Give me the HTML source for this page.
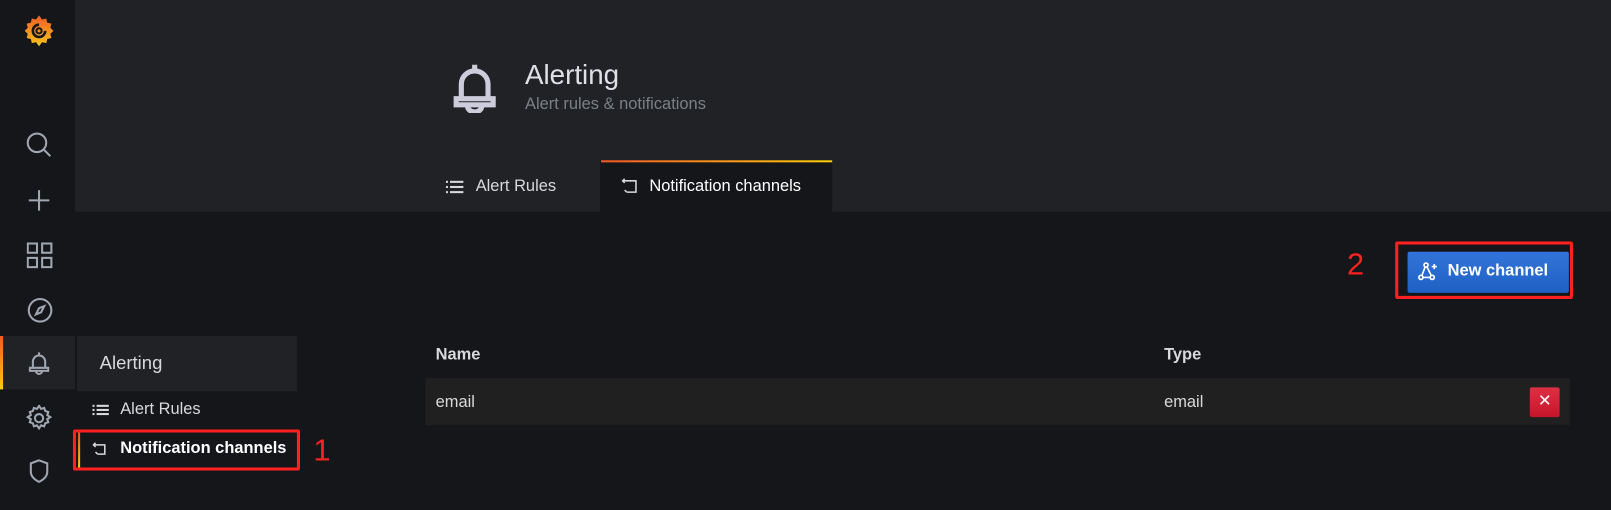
<!DOCTYPE html>
<html><head><meta charset="utf-8"><style>
*{margin:0;padding:0;box-sizing:border-box}
html,body{width:1611px;height:510px;overflow:hidden;background:#141619}
#w{width:1568px;height:496px;transform:scale(1.02742);transform-origin:0 0;position:relative;font-family:"Liberation Sans",sans-serif;color:#d8d9da}
.abs{position:absolute}
svg{position:absolute}
</style></head><body><div id="w">
<div class="abs" style="left:73px;top:0;width:1495px;height:206px;background:#212226"></div>
<div class="abs" style="left:0;top:0;width:73px;height:496px;background:#141619"></div>
<svg style="left:22px;top:13px" width="32" height="34" viewBox="0 0 32 34"><defs><linearGradient id="g" x1="0" y1="1" x2="0" y2="0"><stop offset="0" stop-color="#fcc516"/><stop offset="1" stop-color="#f05a28"/></linearGradient></defs><path d="M16 2l3 4 4-1 1 4 4 1-1 4 3 3-3 3 1 4-4 1-1 4-4-1-3 4-3-4-4 1-1-4-4-1 1-4-3-3 3-3-1-4 4-1 1-4 4 1z" fill="url(#g)"/><path d="M16 11a6 6 0 1 0 6 6" fill="none" stroke="#141619" stroke-width="2.5"/><circle cx="16" cy="17" r="2.5" fill="none" stroke="#141619" stroke-width="2"/></svg>
<svg style="left:25px;top:128px" width="26" height="26" fill="none" stroke="#9fa7b3" stroke-width="2"><circle cx="11" cy="11" r="9"/><path d="M18 18l6 6"/></svg>
<svg style="left:27px;top:184px" width="22" height="22" fill="none" stroke="#9fa7b3" stroke-width="2"><path d="M11 1v20M1 11h20"/></svg>
<svg style="left:26px;top:236px" width="26" height="26" fill="none" stroke="#9fa7b3" stroke-width="2"><rect x="1" y="1" width="9" height="9"/><rect x="15" y="1" width="9" height="9"/><rect x="1" y="15" width="9" height="9"/><rect x="15" y="15" width="9" height="9"/></svg>
<svg style="left:26px;top:289px" width="26" height="26" fill="none" stroke="#9fa7b3" stroke-width="2"><circle cx="13" cy="13" r="11"/><path d="M9 17l3-6 5-2-3 6z"/></svg>
<div class="abs" style="left:0;top:327px;width:73px;height:52px;background:#202226"></div>
<div class="abs" style="left:0;top:327px;width:3px;height:52px;background:linear-gradient(#f05a28,#fbca0a)"></div>
<svg style="left:28px;top:342px" width="20" height="24" fill="none" stroke="#9fa7b3" stroke-width="2"><path d="M10 1v3M4 16V10a6 6 0 0 1 12 0v6M1 16h18v3H1zM7 19a3 3 0 0 0 6 0"/></svg>
<svg style="left:25px;top:394px" width="26" height="26" fill="none" stroke="#9fa7b3" stroke-width="2"><circle cx="13" cy="13" r="4"/><path d="M13 1l2 3 3-1 1 3 3 1-1 3 3 2-3 2 1 3-3 1-1 3-3-1-2 3-2-3-3 1-1-3-3-1 1-3-3-2 3-2-1-3 3-1 1-3 3 1z"/></svg>
<svg style="left:28px;top:447px" width="20" height="24" fill="none" stroke="#9fa7b3" stroke-width="2"><path d="M10 1l8 3v8c0 5-4 8-8 10-4-2-8-5-8-10V4z"/></svg>
<div class="abs" style="left:75px;top:327px;width:214px;height:54px;background:#202226;font-size:18px;color:#d8d9da;padding:16px 0 0 22px">Alerting</div>
<div class="abs" style="left:75px;top:381px;width:214px;height:80px;background:#141619"></div>
<svg style="left:90px;top:393px" width="16" height="12" fill="#d8d9da"><rect x="0" y="1" width="2" height="2"/><rect x="4" y="1" width="12" height="2"/><rect x="0" y="5" width="2" height="2"/><rect x="4" y="5" width="12" height="2"/><rect x="0" y="9" width="2" height="2"/><rect x="4" y="9" width="12" height="2"/></svg>
<div class="abs" style="left:117px;top:390px;font-size:16px;color:#d8d9da">Alert Rules</div>
<div class="abs" style="left:76px;top:421px;width:2px;height:34px;background:linear-gradient(#f05a28,#fbca0a)"></div>
<svg style="left:90px;top:429px" width="16" height="16" fill="none" stroke="#d8d9da" stroke-width="1.5"><path d="M3 2L1 4l2 2M1 4h11v9H5M5 13l-2-2"/></svg>
<div class="abs" style="left:117px;top:428px;font-size:16px;font-weight:bold;color:#fff">Notification channels</div>
<div class="abs" style="left:71px;top:418px;width:221px;height:40px;border:3px solid #ff2020;border-radius:2px"></div>
<div class="abs" style="left:305px;top:422px;font-size:30px;color:#ff2020">1</div>
<svg style="left:441px;top:60px" width="42" height="50" fill="none" stroke="#ccccdc" stroke-width="5"><path d="M21 3v5M8 36V22a13 13 0 0 1 26 0v14M3 36h36v6H3zM14 43a7 6 0 0 0 14 0"/></svg>
<div class="abs" style="left:511px;top:58px;font-size:27px;color:#e0e0e6">Alerting</div>
<div class="abs" style="left:511px;top:93px;font-size:16px;color:#7b8087">Alert rules &amp; notifications</div>
<svg style="left:434px;top:175px" width="18" height="14" fill="#d8d9da"><rect x="0" y="1" width="2" height="2"/><rect x="4" y="1" width="13" height="2"/><rect x="0" y="6" width="2" height="2"/><rect x="4" y="6" width="13" height="2"/><rect x="0" y="11" width="2" height="2"/><rect x="4" y="11" width="13" height="2"/></svg>
<div class="abs" style="left:463px;top:173px;font-size:16px;color:#d8d9da">Alert Rules</div>
<div class="abs" style="left:584px;top:156px;width:226px;height:50px;background:#141619"></div>
<div class="abs" style="left:585px;top:156px;width:225px;height:2px;background:linear-gradient(90deg,#f05a28,#fbca0a)"></div>
<svg style="left:604px;top:172px" width="18" height="18" fill="none" stroke="#d8d9da" stroke-width="1.5"><path d="M4 2L2 4l2 2M2 4h13v11H6M6 15l-2-2"/></svg>
<div class="abs" style="left:632px;top:173px;font-size:16px;color:#fff">Notification channels</div>
<div class="abs" style="left:1370px;top:245px;width:157px;height:40px;background:linear-gradient(#3274d9,#1f60c4);border-radius:2px"></div>
<svg style="left:1380px;top:254px" width="20" height="20" fill="none" stroke="#fff" stroke-width="1.6"><circle cx="8" cy="4" r="2"/><circle cx="3" cy="16" r="2"/><circle cx="14" cy="16" r="2"/><path d="M7 6l-3 8M9 6l4 8M5 16h7M16 3v5M13.5 5.5h5"/></svg>
<div class="abs" style="left:1409px;top:255px;font-size:16px;font-weight:bold;color:#fff">New channel</div>
<div class="abs" style="left:1358px;top:235px;width:173px;height:56px;border:3px solid #ff2020;border-radius:2px"></div>
<div class="abs" style="left:1311px;top:241px;font-size:30px;color:#ff2020">2</div>
<div class="abs" style="left:424px;top:337px;font-size:16px;font-weight:bold;color:#d8d9da">Name</div>
<div class="abs" style="left:1133px;top:337px;font-size:16px;font-weight:bold;color:#d8d9da">Type</div>
<div class="abs" style="left:414px;top:368px;width:1114px;height:46px;background:#202020"></div>
<div class="abs" style="left:424px;top:383px;font-size:16px;color:#d8d9da">email</div>
<div class="abs" style="left:1133px;top:383px;font-size:16px;color:#d8d9da">email</div>
<div class="abs" style="left:1489px;top:377px;width:29px;height:29px;background:linear-gradient(#e02f44,#c4162a);border-radius:2px;color:#fff;font-size:16px;text-align:center;line-height:28px">✕</div>
</div></body></html>
